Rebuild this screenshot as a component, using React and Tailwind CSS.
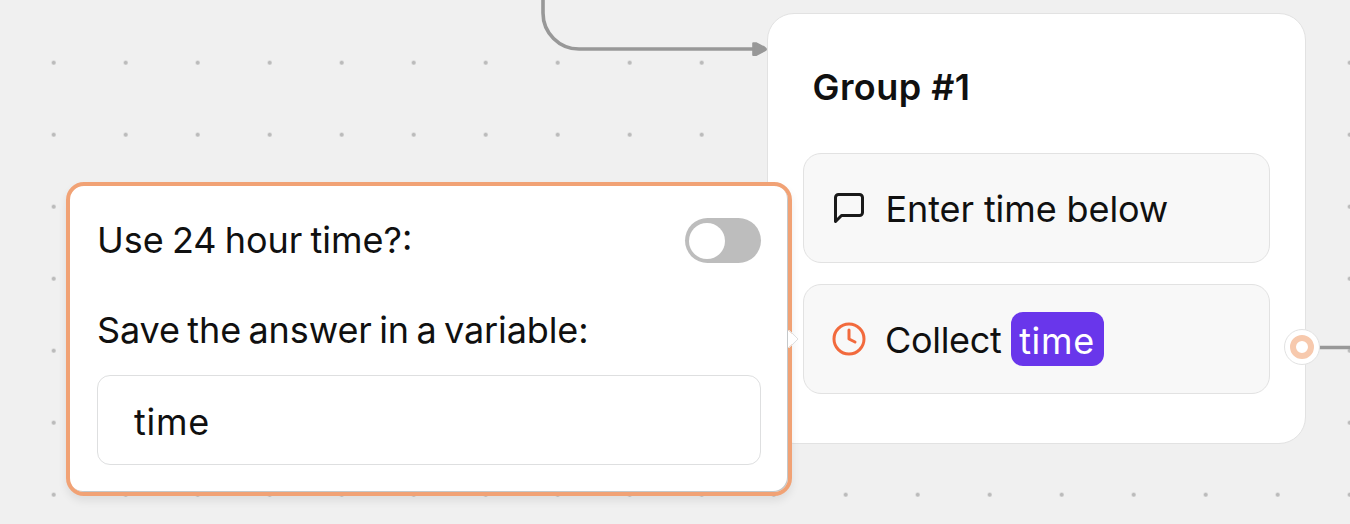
import React from "react";

function Edges() {
  return (
    <svg className="absolute inset-0" width="1350" height="524" fill="none">
      <path d="M543 -4 V13 A36 36 0 0 0 579 49 H754" stroke="#989898" strokeWidth="3.6" />
      <path d="M753.2 43.2 H756 L764.5 47.5 Q767.5 49.2 764.5 50.7 L756 55 H753.2 Z" fill="#989898" stroke="#989898" strokeWidth="2" strokeLinejoin="round" />
      <path d="M1310 347.5 H1350" stroke="#989898" strokeWidth="3.6" />
    </svg>
  );
}

function Block({ icon, children }) {
  return (
    <div className="flex h-[110px] items-center rounded-[18px] border border-[#e2e2e2] bg-[#f8f8f8] pl-[27px]">
      <span className="flex w-9 shrink-0 justify-center">{icon}</span>
      {children}
    </div>
  );
}

function BubbleIcon() {
  return (
    <svg width="36" height="36" viewBox="0 0 24 24" fill="none" stroke="#1a1a1a" strokeWidth="2" strokeLinecap="round" strokeLinejoin="round">
      <path d="M21 15a2 2 0 0 1-2 2H7l-4 4V5a2 2 0 0 1 2-2h14a2 2 0 0 1 2 2z" />
    </svg>
  );
}

function ClockIcon() {
  return (
    <svg width="36" height="36" viewBox="0 0 24 24" fill="none" stroke="#f26a3d" strokeWidth="2" strokeLinecap="round" strokeLinejoin="round">
      <circle cx="12" cy="12" r="10" />
      <path d="M12 6v6l4 2" />
    </svg>
  );
}

function GroupNode() {
  return (
    <section className="absolute left-[767px] top-[13px] flex h-[431px] w-[539px] flex-col rounded-[27px] border border-[#e2e2e2] bg-white px-[35px] pt-[50px]">
      <h2 className="pl-[9.5px] text-[36px] leading-[46px] font-semibold tracking-[0.45px]">Group #1</h2>
      <div className="mt-[43px] flex flex-col gap-[21px]">
        <Block icon={<BubbleIcon />}>
          <span className="ml-[18.5px] pt-0.5 tracking-[-0.1px]">Enter time below</span>
        </Block>
        <Block icon={<ClockIcon />}>
          <span className="ml-[18px] pt-0.5 tracking-[-0.3px]">Collect</span>
          <span className="ml-[9px] flex h-[54px] w-[93px] items-center justify-center rounded-[12px] bg-[#6936eb] pt-1 tracking-[0.7px] text-white">time</span>
        </Block>
      </div>
      <span className="absolute left-[516px] top-[315px] flex size-9 items-center justify-center rounded-full border border-[#e2e2e2] bg-white">
        <span className="size-6 rounded-full border-[6px] border-[#f7c9ad] bg-white" />
      </span>
    </section>
  );
}

function SettingsPopover() {
  return (
    <section className="absolute left-[66px] top-[182px] flex h-[314px] w-[726px] flex-col rounded-[18px] border-4 border-[#f1a275] bg-white px-[27px] pt-[32px] shadow-[0_5px_9px_rgba(0,0,0,0.08),inset_-1px_-1px_0_#c4c8ca]">
      <div className="flex h-[45px] items-center justify-between">
        <span className="tracking-[0px] [word-spacing:-2px]">Use 24 hour time?:</span>
        <button type="button" role="switch" aria-checked="false" className="flex h-[45px] w-[76px] items-center rounded-full bg-[#bdbdbd] pl-1">
          <span className="size-9 rounded-full bg-white" />
        </button>
      </div>
      <span className="mt-[45px] leading-[45px] tracking-[-0.1px] [word-spacing:-2.6px]">Save the answer in a variable:</span>
      <div className="mt-[22px] flex h-[90px] items-center rounded-[13px] border border-[#dedfe0] pl-9 pt-1 tracking-[0.7px]">time</div>
      <svg className="absolute left-[718px] top-[143px]" width="12" height="20" fill="none">
        <path d="M0 1 L9.5 10 L0 19Z" fill="#fff" />
        <path d="M1 1 L10 10 L1 19" stroke="#dedfe0" />
      </svg>
    </section>
  );
}

export default function App() {
  return (
    <main className="relative h-[524px] w-[1350px] overflow-hidden bg-[#f0f0f0] bg-[radial-gradient(circle_at_center,#bbbbbb_1.6px,transparent_2.4px)] bg-[size:72px_72px] bg-[position:17.7px_26.7px] font-['Inter',sans-serif] text-[36px] leading-[45px] text-[#101010]">
      <Edges />
      <GroupNode />
      <SettingsPopover />
    </main>
  );
}
